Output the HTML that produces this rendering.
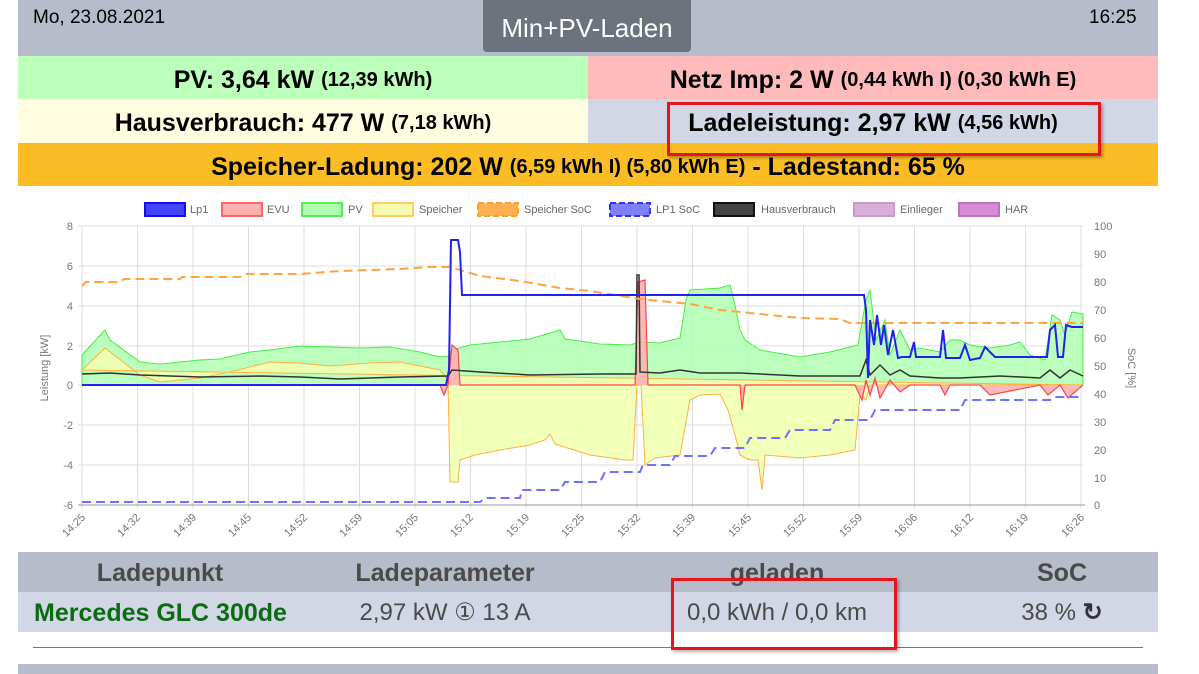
<!DOCTYPE html>
<html><head><meta charset="utf-8"><style>
*{margin:0;padding:0;box-sizing:border-box}
body{width:1199px;height:674px;background:#fff;font-family:"Liberation Sans",sans-serif;position:relative;overflow:hidden;color:#000}
.abs{position:absolute}
.row{position:absolute;display:flex;align-items:center;justify-content:center;font-weight:bold;font-size:25px;white-space:nowrap;padding-top:5px}
.row small{font-size:20px;margin-left:7px}
.th{position:absolute;top:552px;height:40px;line-height:42px;font-size:25px;font-weight:bold;color:#4a4a4a;text-align:center;white-space:nowrap}
.td{position:absolute;top:592px;height:40px;line-height:42px;font-size:24px;color:#4a4a4a;text-align:center;white-space:nowrap}
</style></head><body>
<div class="abs" style="left:18px;top:0;width:1140px;height:56px;background:#b6bcc9"></div>
<div class="abs" style="left:33px;top:7px;font-size:19px">Mo, 23.08.2021</div>
<div class="abs" style="left:1089px;top:7px;font-size:19px">16:25</div>
<div class="abs" style="left:483px;top:0;width:208px;height:52px;background:#6c737d;border-radius:0 0 4px 4px;color:#fff;font-size:26px;text-align:center;line-height:56px">Min+PV-Laden</div>
<div class="row" style="left:18px;top:56px;width:570px;height:43px;background:#bbffbb">PV: 3,64 kW<small>(12,39 kWh)</small></div>
<div class="row" style="left:588px;top:56px;width:570px;height:43px;background:#ffbbbb">Netz Imp: 2 W<small>(0,44 kWh I) (0,30 kWh E)</small></div>
<div class="row" style="left:18px;top:99px;width:570px;height:44px;background:#fffcdf">Hausverbrauch: 477 W<small>(7,18 kWh)</small></div>
<div class="row" style="left:588px;top:99px;width:570px;height:44px;background:#d2d7e5">Ladeleistung: 2,97 kW<small>(4,56 kWh)</small></div>
<div class="row" style="left:18px;top:143px;width:1140px;height:43px;background:#fbbd23">Speicher-Ladung: 202 W<small>(6,59 kWh I) (5,80 kWh E)</small>&nbsp;- Ladestand: 65 %</div>
<div class="abs" style="left:667px;top:102px;width:434px;height:54px;border:3px solid #e8141b;box-shadow:2px 2px 3px rgba(0,0,0,.3)"></div>

<svg class="abs" style="left:0;top:195px" width="1199" height="355" viewBox="0 195 1199 355" font-family="Liberation Sans, sans-serif">
<g font-size="11" fill="#666">
<rect x="145" y="203" width="40" height="13" fill="#4444ff" stroke="#1111ee" stroke-width="2"/><text x="190" y="213">Lp1</text>
<rect x="222" y="203" width="40" height="13" fill="#ffb0b0" stroke="#ff6666" stroke-width="2"/><text x="267" y="213">EVU</text>
<rect x="302" y="203" width="40" height="13" fill="#b0ffb0" stroke="#55ee55" stroke-width="2"/><text x="348" y="213">PV</text>
<rect x="373" y="203" width="40" height="13" fill="#f6fbb0" stroke="#ffcc66" stroke-width="2"/><text x="419" y="213">Speicher</text>
<rect x="478" y="203" width="40" height="13" fill="#ffb050" stroke="#ff9f30" stroke-width="2" stroke-dasharray="6,3"/><text x="524" y="213">Speicher SoC</text>
<rect x="610" y="203" width="40" height="13" fill="#8080ff" stroke="#3333ff" stroke-width="2" stroke-dasharray="6,3"/><text x="656" y="213">LP1 SoC</text>
<rect x="714" y="203" width="40" height="13" fill="#444" stroke="#111" stroke-width="2"/><text x="761" y="213">Hausverbrauch</text>
<rect x="854" y="203" width="40" height="13" fill="#d8b0d8" stroke="#cc99cc" stroke-width="2"/><text x="900" y="213">Einlieger</text>
<rect x="959" y="203" width="40" height="13" fill="#d88cd8" stroke="#c070c0" stroke-width="2"/><text x="1005" y="213">HAR</text>
</g>
<g stroke="#ddd" stroke-width="1">
<line x1="78" y1="226" x2="1083" y2="226"/><line x1="78" y1="266" x2="1083" y2="266"/><line x1="78" y1="306" x2="1083" y2="306"/><line x1="78" y1="346" x2="1083" y2="346"/><line x1="78" y1="385" x2="1083" y2="385"/><line x1="78" y1="425" x2="1083" y2="425"/><line x1="78" y1="465" x2="1083" y2="465"/>
<line x1="82" y1="226" x2="82" y2="509"/><line x1="137.5" y1="226" x2="137.5" y2="509"/><line x1="193" y1="226" x2="193" y2="509"/><line x1="248.5" y1="226" x2="248.5" y2="509"/><line x1="304" y1="226" x2="304" y2="509"/><line x1="359.5" y1="226" x2="359.5" y2="509"/><line x1="415" y1="226" x2="415" y2="509"/><line x1="470.5" y1="226" x2="470.5" y2="509"/><line x1="526" y1="226" x2="526" y2="509"/><line x1="581.5" y1="226" x2="581.5" y2="509"/><line x1="637" y1="226" x2="637" y2="509"/><line x1="692.5" y1="226" x2="692.5" y2="509"/><line x1="748" y1="226" x2="748" y2="509"/><line x1="803.5" y1="226" x2="803.5" y2="509"/><line x1="859" y1="226" x2="859" y2="509"/><line x1="914.5" y1="226" x2="914.5" y2="509"/><line x1="970" y1="226" x2="970" y2="509"/><line x1="1025.5" y1="226" x2="1025.5" y2="509"/><line x1="1081" y1="226" x2="1081" y2="509"/>
</g>
<line x1="78" y1="505" x2="1085" y2="505" stroke="#999"/>
<g font-size="11" fill="#777" text-anchor="end">
<text x="73" y="230">8</text><text x="73" y="270">6</text><text x="73" y="310">4</text><text x="73" y="350">2</text><text x="73" y="389">0</text><text x="73" y="429">-2</text><text x="73" y="469">-4</text><text x="73" y="509">-6</text>
</g>
<g font-size="11" fill="#777">
<text x="1094" y="230">100</text><text x="1094" y="258">90</text><text x="1094" y="286">80</text><text x="1094" y="314">70</text><text x="1094" y="342">60</text><text x="1094" y="370">50</text><text x="1094" y="398">40</text><text x="1094" y="426">30</text><text x="1094" y="454">20</text><text x="1094" y="482">10</text><text x="1094" y="509">0</text>
</g>
<text transform="translate(48,368) rotate(-90)" font-size="11" fill="#777" text-anchor="middle">Leistung [kW]</text>
<text transform="translate(1128,368) rotate(90)" font-size="11" fill="#777" text-anchor="middle">SoC [%]</text>
<g font-size="11" fill="#777" text-anchor="end">
<text transform="translate(86,518) rotate(-45)">14:25</text><text transform="translate(141,518) rotate(-45)">14:32</text><text transform="translate(197,518) rotate(-45)">14:39</text><text transform="translate(252,518) rotate(-45)">14:45</text><text transform="translate(308,518) rotate(-45)">14:52</text><text transform="translate(363,518) rotate(-45)">14:59</text><text transform="translate(419,518) rotate(-45)">15:05</text><text transform="translate(474,518) rotate(-45)">15:12</text><text transform="translate(530,518) rotate(-45)">15:19</text><text transform="translate(585,518) rotate(-45)">15:25</text><text transform="translate(641,518) rotate(-45)">15:32</text><text transform="translate(696,518) rotate(-45)">15:39</text><text transform="translate(752,518) rotate(-45)">15:45</text><text transform="translate(807,518) rotate(-45)">15:52</text><text transform="translate(863,518) rotate(-45)">15:59</text><text transform="translate(918,518) rotate(-45)">16:06</text><text transform="translate(974,518) rotate(-45)">16:12</text><text transform="translate(1029,518) rotate(-45)">16:19</text><text transform="translate(1085,518) rotate(-45)">16:26</text>
</g>
<polygon fill="#b0ffb0" fill-opacity=".85" stroke="#44ee44" stroke-width="1" points="82,385 82,355 105,330 110,340 140,362 160,364 200,360 220,359 250,352 270,350 300,346 330,347 360,348 390,347 420,352 440,357 448,356 452,350 470,345 500,342 530,339 550,333 560,330 565,339 600,344 630,345 640,342 660,343 680,338 686,300 690,290 720,288 730,285 735,305 740,330 745,340 760,350 800,357 830,352 858,345 866,300 870,290 876,340 885,320 890,355 900,330 910,350 920,348 940,352 950,340 960,340 970,345 990,348 1010,345 1020,342 1030,355 1045,360 1052,315 1060,320 1065,335 1072,312 1083,314 1083,385"/>
<polygon fill="#f0ffb0" fill-opacity=".9" stroke="#ffb040" stroke-width="1" points="82,370 105,348 140,375 160,382 200,378 230,372 270,362 300,363 330,366 370,363 400,362 440,370 448,380 450,482 458,482 460,460 475,455 500,450 530,445 545,440 550,434 555,444 590,455 625,460 633,460 637,385 641,385 645,465 655,458 680,455 690,400 700,395 720,394 728,410 735,435 740,455 750,460 758,460 762,490 765,455 800,458 830,455 855,450 860,395 866,400 870,385 1083,385"/>
<polyline fill="#ffb0b0" fill-opacity=".9" stroke="#ff4444" stroke-width="1.2" points="82,385 300,385 440,385 444,395 448,385 452,345 458,350 460,385 635,385 638,282 645,280 648,385 700,385 740,385 742,410 745,385 800,385 855,385 862,400 866,380 870,395 875,378 880,398 890,380 900,392 910,385 940,385 945,395 950,385 980,385 990,395 1040,385 1048,395 1060,385 1068,398 1083,385"/>
<polyline fill="none" stroke="#333" stroke-width="1.5" points="82,374 110,373 140,375 200,377 260,376 300,377 340,379 400,377 448,376 452,370 480,372 530,375 600,374 636,374 637,275 639,275 640,372 660,373 680,370 700,373 740,373 800,376 860,376 866,360 870,375 880,365 890,375 900,370 910,376 940,378 960,378 1000,376 1040,378 1050,370 1060,378 1070,370 1083,376"/>
<polyline fill="none" stroke="#ffa440" stroke-width="2" stroke-dasharray="9,5" points="82,286 86,282 120,282 124,279 180,279 182,277 240,277 245,274 300,274 340,271 400,269 430,267 450,267 480,276 520,281 560,288 590,291 640,299 690,304 720,310 760,314 800,318 840,319 850,323 1083,323"/>
<polyline fill="none" stroke="#7070ff" stroke-width="2" stroke-dasharray="9,5" points="82,502 480,502 485,498 520,498 522,490 560,490 565,482 600,482 605,472 640,472 643,465 670,465 675,456 710,456 715,448 745,448 750,438 785,438 790,430 830,430 835,420 870,420 875,410 960,410 965,400 1050,400 1055,397 1083,397"/>
<polyline fill="none" stroke="#2222ee" stroke-width="2" points="82,385 446,385 449,370 451,240 458,240 460,252 462,295 864,295 866,310 868,378 870,320 874,345 877,315 881,345 884,325 888,355 893,330 898,358 902,357 910,357 914,342 916,357 940,357 943,330 946,358 960,358 965,345 970,360 980,358 985,347 995,357 1040,357 1047,357 1050,330 1055,325 1058,357 1063,357 1066,325 1072,327 1083,327"/>
</svg>

<div class="abs" style="left:18px;top:552px;width:1140px;height:40px;background:#b6bcc9"></div>
<div class="abs" style="left:18px;top:592px;width:1140px;height:40px;background:#d2d7e5"></div>
<div class="th" style="left:60px;width:200px">Ladepunkt</div>
<div class="th" style="left:330px;width:230px">Ladeparameter</div>
<div class="th" style="left:677px;width:200px">geladen</div>
<div class="th" style="left:1012px;width:100px">SoC</div>
<div class="td" style="left:18px;width:285px;color:#0b6b12;font-weight:bold;font-size:25px">Mercedes GLC 300de</div>
<div class="td" style="left:330px;width:230px">2,97 kW ① 13 A</div>
<div class="td" style="left:667px;width:220px">0,0 kWh / 0,0 km</div>
<div class="td" style="left:1002px;width:120px">38 % <b style="color:#333">↻</b></div>
<div class="abs" style="left:33px;top:647px;width:1110px;height:1px;background:#777"></div>
<div class="abs" style="left:18px;top:664px;width:1140px;height:10px;background:#b6bcc9"></div>
<div class="abs" style="left:671px;top:578px;width:226px;height:72px;border:3px solid #e8141b;box-shadow:2px 2px 3px rgba(0,0,0,.3)"></div>
</body></html>
